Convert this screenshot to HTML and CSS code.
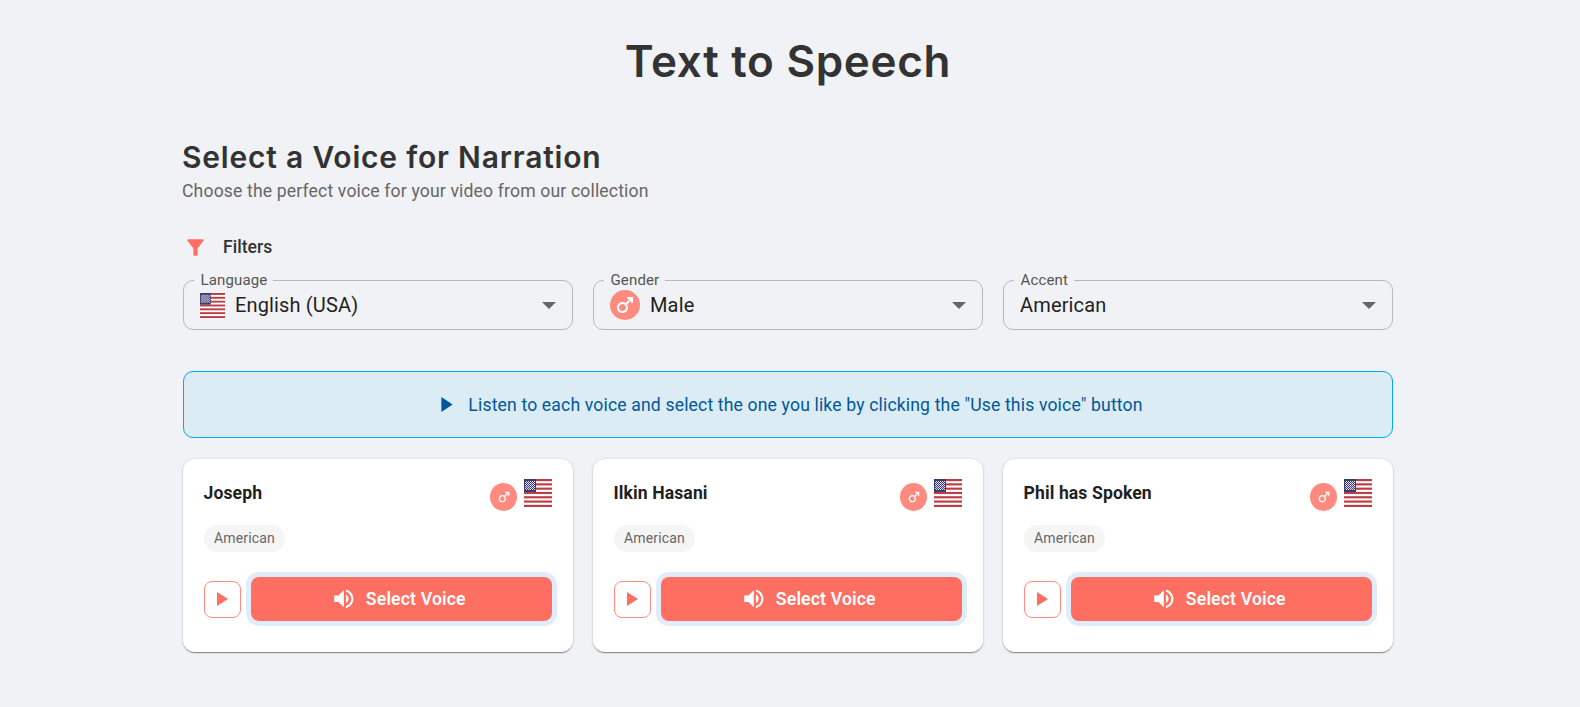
FILE: index.html
```html
<!DOCTYPE html>
<html lang="en">
<head>
<meta charset="utf-8">
<title>Text to Speech</title>
<link rel="stylesheet" href="styles.css">
</head>
<body>
<svg class="defs" width="0" height="0" aria-hidden="true">
  <defs>
    <pattern id="stars" width="2" height="2" patternUnits="userSpaceOnUse">
      <rect width="1" height="1" fill="#e4e4f0"/>
      <rect x="1" y="1" width="1" height="1" fill="#d0d0e4"/>
    </pattern>
    <g id="flag">
      <rect width="28" height="28" fill="#fff"/>
      <rect y="0" width="28" height="2.15" fill="#bd3d44"/>
      <rect y="4.3" width="28" height="2.15" fill="#bd3d44"/>
      <rect y="8.6" width="28" height="2.15" fill="#bd3d44"/>
      <rect y="12.9" width="28" height="2.15" fill="#bd3d44"/>
      <rect y="17.2" width="28" height="2.15" fill="#bd3d44"/>
      <rect y="21.5" width="28" height="2.15" fill="#bd3d44"/>
      <rect y="25.85" width="28" height="2.15" fill="#bd3d44"/>
      <rect width="12" height="13" fill="#3c3b6e"/>
      <rect x="1" y="2" width="10" height="9" fill="url(#stars)"/>
    </g>
    <path id="male" d="M9.5 11c1.93 0 3.5 1.57 3.5 3.5S11.43 18 9.5 18 6 16.43 6 14.5 7.57 11 9.5 11zm0-2C6.46 9 4 11.46 4 14.5S6.46 20 9.5 20s5.5-2.46 5.5-5.5c0-1.16-.36-2.23-.97-3.12L18 7.42V10h2V4h-6v2h2.58l-3.97 3.97C11.73 9.36 10.66 9 9.5 9z"/>
  </defs>
</svg>
<main class="page">
  <h1 class="title">Text to Speech</h1>
  <div class="container">
    <h2 class="heading">Select a Voice for Narration</h2>
    <p class="subtitle">Choose the perfect voice for your video from our collection</p>

    <div class="filters-head">
      <svg class="filter-icon" viewBox="0 0 24 24"><path d="M4.25 5.61C6.27 8.2 10 13 10 13v6c0 .55.45 1 1 1h2c.55 0 1-.45 1-1v-6s3.72-4.8 5.74-7.39c.51-.66.04-1.61-.79-1.61H5.04c-.83 0-1.3.95-.79 1.61z"/></svg>
      <span>Filters</span>
    </div>

    <div class="filters">
      <div class="select">
        <span class="select-label">Language</span>
        <svg class="flag-lg" viewBox="0 0 28 28"><use href="#flag"/></svg>
        <span class="select-value">English (USA)</span>
        <span class="caret"></span>
      </div>
      <div class="select">
        <span class="select-label">Gender</span>
        <span class="gender gender-lg"><svg viewBox="0 0 24 24"><use href="#male"/></svg></span>
        <span class="select-value">Male</span>
        <span class="caret"></span>
      </div>
      <div class="select">
        <span class="select-label">Accent</span>
        <span class="select-value">American</span>
        <span class="caret"></span>
      </div>
    </div>

    <div class="banner">
      <svg class="banner-icon" viewBox="0 0 12 16"><path d="M0 0l12 8-12 8z"/></svg>
      <span>Listen to each voice and select the one you like by clicking the "Use this voice" button</span>
    </div>

    <div class="cards">
      <article class="card">
        <div class="card-top">
          <h3 class="name">Joseph</h3>
          <div class="badges">
            <span class="gender gender-sm"><svg viewBox="0 0 24 24"><use href="#male"/></svg></span>
            <svg class="flag-sm" viewBox="0 0 28 28"><use href="#flag"/></svg>
          </div>
        </div>
        <span class="chip">American</span>
        <div class="actions">
          <button class="play" type="button"><svg viewBox="0 0 12 14"><path d="M0 0l11 7-11 7z"/></svg></button>
          <button class="pick" type="button">
            <svg viewBox="0 0 24 24"><path d="M3 9v6h4l5 5V4L7 9H3zm13.5 3c0-1.77-1.02-3.29-2.5-4.03v8.05c1.48-.73 2.5-2.25 2.5-4.02zM14 3.23v2.06c2.89.86 5 3.54 5 6.71s-2.11 5.85-5 6.71v2.06c4.01-.91 7-4.49 7-8.77s-2.99-7.86-7-8.77z"/></svg>
            Select Voice
          </button>
        </div>
      </article>
      <article class="card">
        <div class="card-top">
          <h3 class="name">Ilkin Hasani</h3>
          <div class="badges">
            <span class="gender gender-sm"><svg viewBox="0 0 24 24"><use href="#male"/></svg></span>
            <svg class="flag-sm" viewBox="0 0 28 28"><use href="#flag"/></svg>
          </div>
        </div>
        <span class="chip">American</span>
        <div class="actions">
          <button class="play" type="button"><svg viewBox="0 0 12 14"><path d="M0 0l11 7-11 7z"/></svg></button>
          <button class="pick" type="button">
            <svg viewBox="0 0 24 24"><path d="M3 9v6h4l5 5V4L7 9H3zm13.5 3c0-1.77-1.02-3.29-2.5-4.03v8.05c1.48-.73 2.5-2.25 2.5-4.02zM14 3.23v2.06c2.89.86 5 3.54 5 6.71s-2.11 5.85-5 6.71v2.06c4.01-.91 7-4.49 7-8.77s-2.99-7.86-7-8.77z"/></svg>
            Select Voice
          </button>
        </div>
      </article>
      <article class="card">
        <div class="card-top">
          <h3 class="name">Phil has Spoken</h3>
          <div class="badges">
            <span class="gender gender-sm"><svg viewBox="0 0 24 24"><use href="#male"/></svg></span>
            <svg class="flag-sm" viewBox="0 0 28 28"><use href="#flag"/></svg>
          </div>
        </div>
        <span class="chip">American</span>
        <div class="actions">
          <button class="play" type="button"><svg viewBox="0 0 12 14"><path d="M0 0l11 7-11 7z"/></svg></button>
          <button class="pick" type="button">
            <svg viewBox="0 0 24 24"><path d="M3 9v6h4l5 5V4L7 9H3zm13.5 3c0-1.77-1.02-3.29-2.5-4.03v8.05c1.48-.73 2.5-2.25 2.5-4.02zM14 3.23v2.06c2.89.86 5 3.54 5 6.71s-2.11 5.85-5 6.71v2.06c4.01-.91 7-4.49 7-8.77s-2.99-7.86-7-8.77z"/></svg>
            Select Voice
          </button>
        </div>
      </article>
    </div>
  </div>
</main>
</body>
</html>
```

FILE: styles.css
```css
* { box-sizing: border-box; }
html, body { margin: 0; height: 100%; overflow: hidden; }
body { background: #f0f2f5; font-family: Roboto, sans-serif; color: #1f1f1f; letter-spacing: .00938em; }
.defs { position: absolute; }
.page { width: 1576px; padding-top: 32px; }
.title { margin: 0; height: 58px; font: 600 44px/58px Inter, sans-serif; color: #333; text-align: center; letter-spacing: .7px; }
.container { width: 1210px; margin: 49px auto 0; }
.heading { margin: 0 0 0 -1px; font: 600 30px/36px Inter, sans-serif; color: #333; letter-spacing: .8px; }
.subtitle { margin: 3px 0 0 -1px; font-size: 17.6px; line-height: 26px; color: #666; }
.filters-head { display: flex; align-items: center; gap: 15px; margin-top: 29px; height: 28px; font-size: 17.6px; font-weight: 500; color: #333; letter-spacing: 0; }
.filter-icon { width: 25px; height: 25px; fill: #ff6f61; flex: none; }
.filters { display: grid; grid-template-columns: repeat(3, 1fr); gap: 20px; margin-top: 19px; }
.select { position: relative; display: flex; align-items: center; height: 50px; padding: 0 16px; border: 1px solid #b8b9bd; border-radius: 10px; }
.select-label { position: absolute; top: -10px; left: 10px; padding: 0 6px 0 6.5px; background: #f0f2f5; font-size: 15px; line-height: 18px; color: #555; }
.select-value { flex: 1; font-size: 20px; color: #1f1f1f; }
.caret { width: 0; height: 0; border-left: 7px solid transparent; border-right: 7px solid transparent; border-top: 7px solid #666; }
.flag-lg { width: 25px; height: 25px; margin-right: 10px; flex: none; }
.gender { display: flex; align-items: center; justify-content: center; border-radius: 50%; background: #ff8a80; flex: none; }
.gender svg { fill: #fff; }
.gender-lg { width: 30px; height: 30px; margin-right: 10px; }
.gender-lg svg { width: 24px; height: 24px; }
.gender-sm { width: 27px; height: 28px; margin-top: 4px; }
.gender-sm svg { width: 16px; height: 16px; }
.banner { display: flex; align-items: center; justify-content: center; gap: 15px; height: 67px; margin-top: 41px; padding-left: 8px; border: 1px solid #03a9f4; border-radius: 10px; background: #dbecf4; font-size: 17.6px; color: #01579b; }
.banner-icon { width: 12px; height: 15px; fill: #01579b; flex: none; }
.cards { display: grid; grid-template-columns: repeat(3, 1fr); gap: 20px; margin-top: 21px; }
.card { height: 193px; padding: 20px 21px; background: #fff; border-radius: 12px; box-shadow: 0 2px 1px -1px rgba(0,0,0,.3), 0 1px 2px 0 rgba(0,0,0,.2), 0 0 3px 0 rgba(0,0,0,.1); display: flex; flex-direction: column; align-items: flex-start; }
.card-top { display: flex; justify-content: space-between; width: 100%; height: 46px; }
.name { margin: 1px 0 0 -.5px; font-size: 17.6px; line-height: 26px; font-weight: 700; color: #1f1f1f; letter-spacing: .1px; }
.badges { display: flex; gap: 7px; align-items: flex-start; }
.flag-sm { width: 28px; height: 28px; flex: none; }
.chip { padding: 0 10px; height: 27px; line-height: 27px; border-radius: 14px; background: #f5f5f5; font-size: 14px; color: #666; }
.actions { display: flex; align-items: center; gap: 10px; width: 100%; margin-top: 25px; }
.play { display: flex; align-items: center; justify-content: center; width: 37px; height: 37px; padding: 0; flex: none; background: #fff; border: 1px solid #ff8a80; border-radius: 8px; }
.play svg { width: 12px; height: 14px; fill: #ff6f61; }
.pick { display: flex; align-items: center; justify-content: center; gap: 9px; flex: 1; height: 44px; padding: 0 12px 0 6px; border: 0; border-radius: 8px; background: #ff6f61; color: #fff; font: 600 17.6px Roboto, sans-serif; letter-spacing: .00938em; box-shadow: 0 0 0 5px #e0ecf9; }
.pick svg { width: 25.6px; height: 25.6px; fill: #fff; }
```
